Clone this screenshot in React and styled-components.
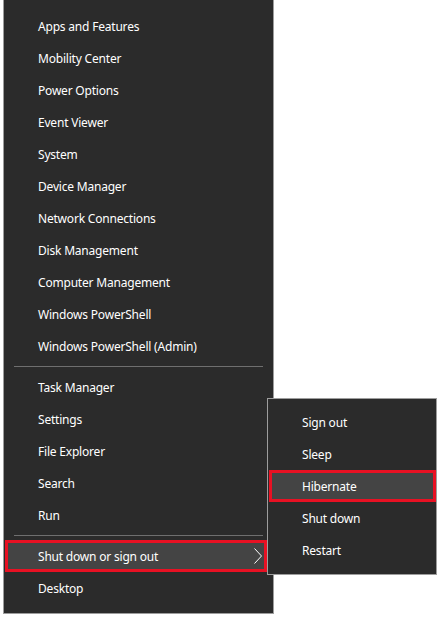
import React from "react";
import styled, { createGlobalStyle } from "styled-components";

const GlobalStyle = createGlobalStyle`
  html, body {
    margin: 0;
    padding: 0;
    background: #ffffff;
  }
  body {
    font-family: "Noto Sans", "Open Sans", sans-serif;
  }
`;

const mainGroups = [
  [
    "Apps and Features",
    "Mobility Center",
    "Power Options",
    "Event Viewer",
    "System",
    "Device Manager",
    "Network Connections",
    "Disk Management",
    "Computer Management",
    "Windows PowerShell",
    "Windows PowerShell (Admin)",
  ],
  ["Task Manager", "Settings", "File Explorer", "Search", "Run"],
  [{ label: "Shut down or sign out", active: true, submenu: true }, "Desktop"],
];

const powerItems = [
  { label: "Sign out" },
  { label: "Sleep" },
  { label: "Hibernate", active: true },
  { label: "Shut down" },
  { label: "Restart" },
];

function Chevron() {
  return (
    <svg width="8" height="16" viewBox="0 0 8 16">
      <polyline
        points="0.5,0.5 7.5,8 0.5,15.5"
        fill="none"
        stroke="#ffffff"
        strokeWidth="1"
      />
    </svg>
  );
}

export default function App() {
  return (
    <>
      <GlobalStyle />
      <Stage>
        <Menu>
          {mainGroups.map((group, gi) => (
            <React.Fragment key={gi}>
              {gi > 0 && <Separator />}
              {group.map((entry) => {
                const item = typeof entry === "string" ? { label: entry } : entry;
                return (
                  <Item key={item.label} $active={item.active}>
                    <span>{item.label}</span>
                    {item.submenu && <Chevron />}
                  </Item>
                );
              })}
            </React.Fragment>
          ))}
        </Menu>
        <Flyout>
          {powerItems.map((item) => (
            <FlyItem key={item.label} $active={item.active}>
              {item.label}
            </FlyItem>
          ))}
        </Flyout>
      </Stage>
    </>
  );
}

const Stage = styled.div`
  position: relative;
  width: 440px;
  height: 618px;
  overflow: hidden;
`;

const Menu = styled.div`
  box-sizing: border-box;
  margin-left: 3px;
  width: 271px;
  height: 614px;
  padding: 10px 0 8px;
  background: #2b2b2b;
  border: 1px solid #9d9d9d;
  border-top: none;
  display: flex;
  flex-direction: column;
`;

const Item = styled.div`
  box-sizing: border-box;
  height: 32px;
  flex: none;
  display: flex;
  align-items: center;
  justify-content: space-between;
  padding: 0 2px 0 34px;
  color: #ffffff;
  font-size: 12px;
  letter-spacing: -0.2px;
  white-space: nowrap;

  ${(p) =>
    p.$active &&
    `
    margin: 0 6px 0 1px;
    padding: 0 2px 0 30px;
    background: #444444;
    border: 3px solid #e81123;
  `}
`;

const Separator = styled.div`
  flex: none;
  height: 9px;
  margin: 0 10px;
  position: relative;
  &::after {
    content: "";
    display: block;
    position: absolute;
    left: 0;
    right: 0;
    top: 4px;
    height: 1px;
    background: #6f6f6f;
  }
`;

const Flyout = styled.div`
  box-sizing: border-box;
  position: absolute;
  left: 267px;
  top: 398px;
  width: 170px;
  height: 177px;
  padding: 7px 0 10px;
  background: #2b2b2b;
  border: 1px solid #9d9d9d;
  display: flex;
  flex-direction: column;
`;

const FlyItem = styled(Item)`
  padding: 0 0 0 34px;

  ${(p) =>
    p.$active &&
    `
    margin: 0 0 0 1px;
    padding: 0 0 0 30px;
  `}
`;
